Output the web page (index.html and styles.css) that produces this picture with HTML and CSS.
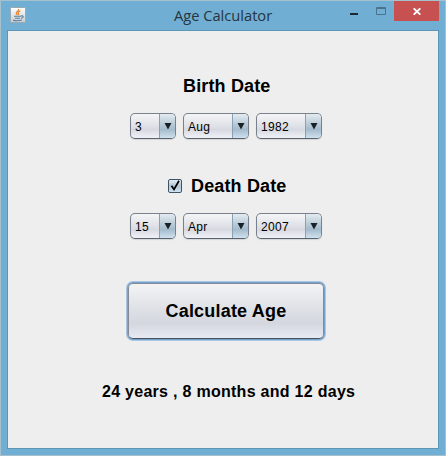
FILE: index.html
```html
<!DOCTYPE html>
<html lang="en">
<head>
<meta charset="utf-8">
<title>Age Calculator</title>
<link rel="stylesheet" href="styles.css">
</head>
<body>
<div class="window">
  <header class="titlebar">
    <svg class="app-icon" width="16" height="16" viewBox="0 0 16 16">
      <defs><linearGradient id="tile" x1="0" y1="0" x2="0" y2="1"><stop offset="0" stop-color="#fff"/><stop offset="1" stop-color="#c6cbd0"/></linearGradient></defs>
      <rect x=".5" y=".5" width="15" height="15" rx="1" fill="url(#tile)" stroke="#9ba9b2"/>
      <path d="M8.6 2C9.6 4 5.8 4.8 6.2 6.4C6.4 7.2 7.2 7.6 7.3 8.2M10.4 3.8C8 5 7.6 5.7 8.6 6.6C9 7.2 8.6 7.7 8.2 8.2" fill="none" stroke="#e8822d" stroke-width="1.2"/>
      <path d="M4 9.3H11M5 11.2H10M3 13.2Q7.5 14.3 12 13M11 8.9C14 8.2 14 10.7 11 11.3" fill="none" stroke="#54809f" stroke-width="1.1"/>
    </svg>
    <h1 class="title">Age Calculator</h1>
    <svg class="controls" width="63" height="20" viewBox="0 0 63 20">
      <path d="M0 13H8V15H0Z" fill="#1d2930"/>
      <path d="M26.5 7.5H35.5V14.5H26.5Z" fill="none" stroke="#4b748c"/>
      <path d="M26 8.5H36" stroke="#4b748c"/>
    </svg>
    <button class="close" aria-label="Close"><svg width="8" height="7" viewBox="0 0 8 7"><path d="M.7 .3L7.3 6.7M7.3 .3L.7 6.7" stroke="#fff" stroke-width="1.8"/></svg></button>
  </header>
  <main class="client">
    <h2 class="heading birth">Birth Date</h2>
    <div class="row">
      <div class="combo day"><span>3</span><i><svg width="8" height="7"><path d="M.5 0H7.5L4 6.5Z"/></svg></i></div>
      <div class="combo month"><span>Aug</span><i><svg width="8" height="7"><path d="M.5 0H7.5L4 6.5Z"/></svg></i></div>
      <div class="combo year"><span>1982</span><i><svg width="8" height="7"><path d="M.5 0H7.5L4 6.5Z"/></svg></i></div>
    </div>
    <div class="death">
      <svg class="check" width="14" height="14" viewBox="0 0 14 14">
        <defs><linearGradient id="box" x1="0" y1="0" x2="0" y2="1"><stop offset="0" stop-color="#e9f0f5"/><stop offset=".5" stop-color="#b1c6d6"/><stop offset="1" stop-color="#d5e6f3"/></linearGradient></defs>
        <rect x=".5" y=".5" width="13" height="13" rx="1.5" fill="url(#box)" stroke="#3d5367"/>
        <path d="M3.5 6.8L6 10.4L11 1.8" fill="none" stroke="#000" stroke-width="1.7"/>
      </svg>
      <h2 class="heading">Death Date</h2>
    </div>
    <div class="row">
      <div class="combo day"><span>15</span><i><svg width="8" height="7"><path d="M.5 0H7.5L4 6.5Z"/></svg></i></div>
      <div class="combo month"><span>Apr</span><i><svg width="8" height="7"><path d="M.5 0H7.5L4 6.5Z"/></svg></i></div>
      <div class="combo year"><span>2007</span><i><svg width="8" height="7"><path d="M.5 0H7.5L4 6.5Z"/></svg></i></div>
    </div>
    <button class="calculate">Calculate Age</button>
    <p class="result">24 years , 8 months and 12 days</p>
  </main>
</div>
</body>
</html>
```
FILE: styles.css
```css
* { box-sizing: border-box; }
body { margin: 0; font-family: "Liberation Sans", Arial, sans-serif; color: #000; }
h1, h2, p { margin: 0; }
button { border: 0; padding: 0; font-family: inherit; color: inherit; }
svg { display: block; }
.window {
  width: 446px;
  height: 456px;
  padding: 0 6px 6px;
  background: #70aed3;
  border: 1px solid #a5c1ce;
}
.titlebar { display: flex; align-items: flex-start; height: 29px; }
.app-icon { margin: 6px 0 0 3px; }
.title {
  width: 100px;
  margin: 4px 0 0 148px;
  font: 400 14.7px/21px "Open Sans", "Noto Sans", sans-serif;
  letter-spacing: -0.02px;
  white-space: nowrap;
  color: #263540;
}
.controls { margin: -1px -19px 0 76px; flex: none; }
.close {
  display: grid;
  place-items: center;
  flex: none;
  width: 45px;
  height: 20px;
  padding-top: 1px;
  background: #c75050;
}
.client {
  display: flex;
  flex-direction: column;
  height: 419px;
  background: #eee;
  border: 1px solid #5c96b7;
}
.heading { font-size: 18px; line-height: 22px; letter-spacing: 0.15px; white-space: nowrap; }
.birth { margin: 44px 0 0 175px; }
.row { display: flex; gap: 7px; margin: 16px 0 0 122px; }
.combo {
  display: flex;
  justify-content: space-between;
  height: 26px;
  border: 1px solid #79818c;
  border-bottom-color: #59616c;
  border-radius: 5px;
  overflow: hidden;
  background: linear-gradient(#f5f5f7, #dfe1e7 50%, #d6d9df 65%, #f0f2f8);
  box-shadow: 0 1px 1px #d2d4d6;
  font-size: 12px;
  line-height: 26px;
  letter-spacing: 0.3px;
}
.combo span { padding-left: 4px; }
.combo i {
  display: grid;
  place-items: center;
  width: 16px;
  border-left: 1px solid #88a1b5;
  background: linear-gradient(#e3ebf1, #b1c5d3 50%, #a5bccd 65%, #cfe1ee);
}
.combo path { fill: #182128; }
.day { width: 46px; }
.month { width: 66px; }
.year { width: 66px; }
.death { display: flex; align-items: center; gap: 9px; margin: 36px 0 0 160px; }
.calculate {
  width: 196px;
  height: 56px;
  margin: 44px 0 0 120px;
  border: 1px solid #838995;
  border-bottom-color: #4d5158;
  border-radius: 5px;
  background: linear-gradient(#f4f4f5, #dcdfe4 50%, #d4d7de 73%, #e7eaf3);
  box-shadow: 0 0 0 1px #73a4d1, 0 0 0 2px #a9c7e2;
  font-size: 18px;
  font-weight: 700;
  letter-spacing: 0.2px;
}
.result { margin: 43px 0 0 94px; font-size: 16px; font-weight: 700; line-height: 20px; letter-spacing: 0.28px; white-space: nowrap; }
```
